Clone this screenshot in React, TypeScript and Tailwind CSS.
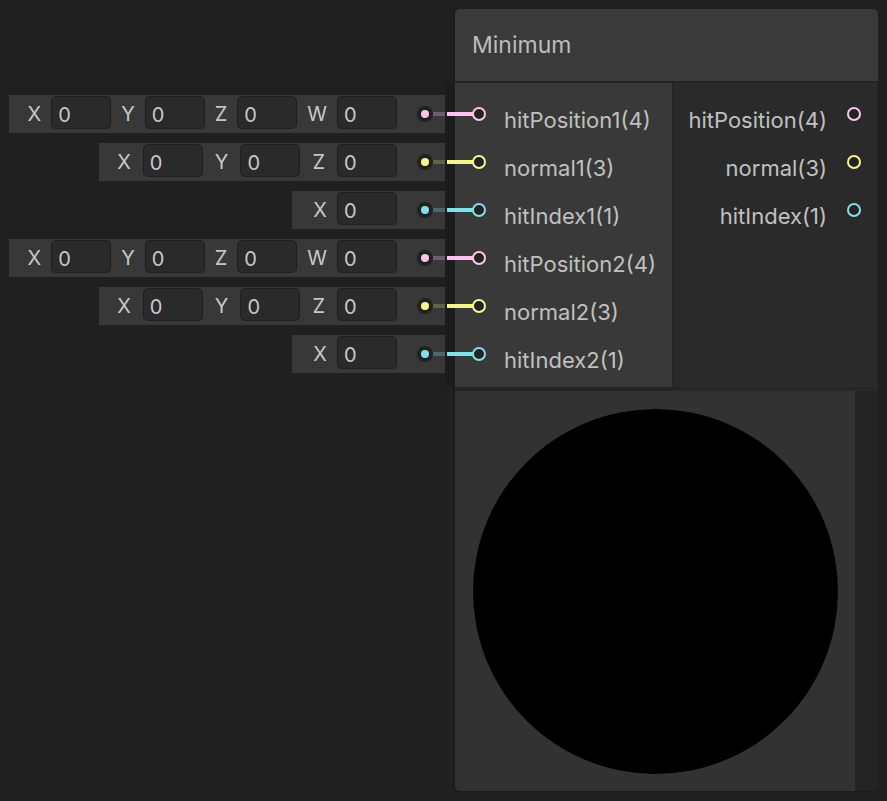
import React from "react";

type Tone = "pink" | "yellow" | "cyan";

const tones: Record<Tone, { bright: string; dim: string; dot: string; ring: string }> = {
  pink: { bright: "bg-[#f9c4ee]", dim: "bg-[#6b5d69]", dot: "bg-[#f9c4ee]", ring: "border-[#f9c4ee]" },
  yellow: { bright: "bg-[#f6f68c]", dim: "bg-[#62624a]", dot: "bg-[#f6f68c]", ring: "border-[#f6f68c]" },
  cyan: { bright: "bg-[#84e0e8]", dim: "bg-[#4d6567]", dot: "bg-[#84e0e8]", ring: "border-[#84e0e8]" },
};

interface FieldRow {
  axes: string[];
  tone: Tone;
  width: string;
  labelPad: string;
}

const fieldRows: FieldRow[] = [
  { axes: ["X", "Y", "Z", "W"], tone: "pink", width: "w-[436px]", labelPad: "px-[10px]" },
  { axes: ["X", "Y", "Z"], tone: "yellow", width: "w-[346px]", labelPad: "px-[12px]" },
  { axes: ["X"], tone: "cyan", width: "w-[153px]", labelPad: "px-[10px]" },
  { axes: ["X", "Y", "Z", "W"], tone: "pink", width: "w-[436px]", labelPad: "px-[10px]" },
  { axes: ["X", "Y", "Z"], tone: "yellow", width: "w-[346px]", labelPad: "px-[12px]" },
  { axes: ["X"], tone: "cyan", width: "w-[153px]", labelPad: "px-[10px]" },
];

const inputs: { label: string; tone: Tone }[] = [
  { label: "hitPosition1(4)", tone: "pink" },
  { label: "normal1(3)", tone: "yellow" },
  { label: "hitIndex1(1)", tone: "cyan" },
  { label: "hitPosition2(4)", tone: "pink" },
  { label: "normal2(3)", tone: "yellow" },
  { label: "hitIndex2(1)", tone: "cyan" },
];

const outputs: { label: string; tone: Tone }[] = [
  { label: "hitPosition(4)", tone: "pink" },
  { label: "normal(3)", tone: "yellow" },
  { label: "hitIndex(1)", tone: "cyan" },
];

function Field({ row }: { row: FieldRow }) {
  const t = tones[row.tone];
  return (
    <div className={`flex h-[38px] items-center justify-end bg-[#383838] ${row.width}`}>
      {row.axes.map((axis) => (
        <div key={axis} className="flex items-center">
          <span className={`text-[20px] leading-none text-[#c8c8c8] ${row.labelPad}`}>{axis}</span>
          <div className="mb-[3px] flex h-[33px] w-[60px] items-center rounded-[5px] border border-[#1e1e1e] bg-[#2a2a2a] pl-[6px] pt-[4px] text-[20px] leading-none text-[#c8c8c8]">
            0
          </div>
        </div>
      ))}
      <div className="ml-[20px] flex h-[16px] w-[16px] items-center justify-center rounded-full bg-[#212121]">
        <div className={`h-[8px] w-[8px] rounded-full ${t.dot}`} />
      </div>
      <div className={`h-[4px] w-[12px] ${t.dim}`} />
    </div>
  );
}

function Port({ tone }: { tone: Tone }) {
  return (
    <div className={`h-[14px] w-[14px] shrink-0 rounded-full border-2 bg-[#232323] ${tones[tone].ring}`} />
  );
}

export default function App() {
  return (
    <div
      className="flex h-[801px] w-[887px] items-start overflow-hidden bg-[#202020]"
      style={{ fontFamily: "Inter, 'Noto Sans', sans-serif" }}
    >
      {/* Inline value fields */}
      <div className="flex w-[445px] flex-col items-end gap-[10px] pt-[95px]">
        {fieldRows.map((row, i) => (
          <Field key={i} row={row} />
        ))}
      </div>

      <div className="mt-[83px] h-[304px] w-[8px] bg-[#1c1c1c]" />

      {/* Node */}
      <div className="mt-[9px] flex w-[426px] flex-col rounded-[6px] border-l-2 border-r border-b border-[#1c1c1c]">
        <div className="flex h-[72px] items-center rounded-t-[5px] bg-[#3a3a3a] pl-[17px] text-[23px] text-[#bdbdbd]">
          Minimum
        </div>
        <div className="h-[2px] bg-[#242424]" />
        <div className="flex h-[304px]">
          <div className="w-[217px] bg-[#393939] pt-[7px]">
            {inputs.map((p) => (
              <div key={p.label} className="relative flex h-[48px] items-center pl-[17px]">
                <div className={`absolute left-[-8px] top-[22px] h-[4px] w-[26px] ${tones[p.tone].bright}`} />
                <div className="relative">
                  <Port tone={p.tone} />
                </div>
                <span className="ml-[18px] translate-y-[6px] text-[22px] leading-none text-[#c0c0c0]">
                  {p.label}
                </span>
              </div>
            ))}
          </div>
          <div className="w-[2px] bg-[#242424]" />
          <div className="flex-1 bg-[#2a2a2a] pt-[7px]">
            {outputs.map((p) => (
              <div key={p.label} className="flex h-[48px] items-center justify-end pr-[17px]">
                <span className="translate-y-[6px] text-[22px] leading-none text-[#c0c0c0]">{p.label}</span>
                <div className="ml-[20px]">
                  <Port tone={p.tone} />
                </div>
              </div>
            ))}
          </div>
        </div>
        <div className="h-[4px] bg-[#262626]" />
        <div className="flex">
          <div className="flex h-[400px] w-[400px] items-center justify-center rounded-bl-[5px] bg-[#323232]">
            <div className="h-[365px] w-[365px] rounded-full bg-black" />
          </div>
          <div className="flex-1 rounded-br-[5px] bg-[#242424]" />
        </div>
      </div>
    </div>
  );
}
